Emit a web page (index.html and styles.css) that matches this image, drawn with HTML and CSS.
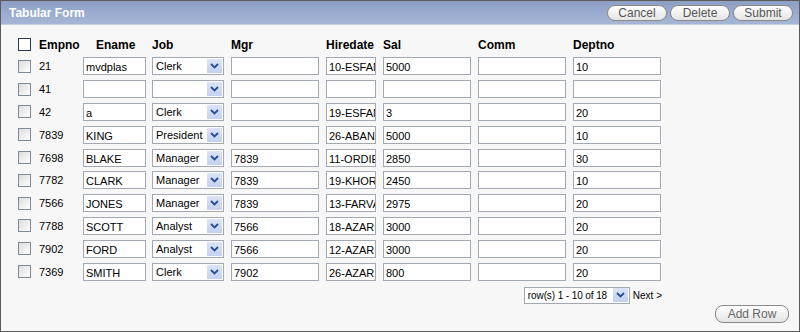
FILE: index.html
```html
<!DOCTYPE html>
<html lang="en">
<head>
<meta charset="UTF-8">
<title>Tabular Form</title>
<link rel="stylesheet" href="styles.css">
</head>
<body>
<div class="region">
  <div class="region-header">
    <span class="region-title">Tabular Form</span>
    <div class="region-buttons">
      <button class="pill">Cancel</button>
      <button class="pill">Delete</button>
      <button class="pill">Submit</button>
    </div>
  </div>
  <div class="region-body">
    <table class="tabform">
      <colgroup>
        <col class="c-chk"><col class="c-empno"><col class="c-ename"><col class="c-job">
        <col class="c-mgr"><col class="c-hire"><col class="c-sal"><col class="c-comm"><col class="c-dept">
      </colgroup>
      <thead>
        <tr>
          <th><span class="chk"></span></th>
          <th>Empno</th>
          <th class="center">Ename</th>
          <th>Job</th>
          <th>Mgr</th>
          <th>Hiredate</th>
          <th>Sal</th>
          <th>Comm</th>
          <th>Deptno</th>
        </tr>
      </thead>
      <tbody id="rows"></tbody>
    </table>
    <div class="pager">
      <div class="sel pager-sel"><span class="sel-text">row(s) 1 - 10 of 18</span><span class="sel-btn"><svg width="9" height="6" viewBox="0 0 9 6"><path d="M1 1 L4.5 4.5 L8 1" fill="none" stroke="#2a4a9a" stroke-width="1.8"/></svg></span></div>
      <a class="next">Next &gt;</a>
    </div>
    <div class="footer">
      <button class="pill add">Add Row</button>
    </div>
  </div>
</div>
<script>
const data = [
  ['21', 'mvdplas', 'Clerk', '', '10-ESFAN', '5000', '', '10'],
  ['41', '', '', '', '', '', '', ''],
  ['42', 'a', 'Clerk', '', '19-ESFAN', '3', '', '20'],
  ['7839', 'KING', 'President', '', '26-ABAN', '5000', '', '10'],
  ['7698', 'BLAKE', 'Manager', '7839', '11-ORDIE', '2850', '', '30'],
  ['7782', 'CLARK', 'Manager', '7839', '19-KHOR', '2450', '', '10'],
  ['7566', 'JONES', 'Manager', '7839', '13-FARVA', '2975', '', '20'],
  ['7788', 'SCOTT', 'Analyst', '7566', '18-AZAR', '3000', '', '20'],
  ['7902', 'FORD', 'Analyst', '7566', '12-AZAR', '3000', '', '20'],
  ['7369', 'SMITH', 'Clerk', '7902', '26-AZAR', '800', '', '20']
];
const arrow = '<span class="sel-btn"><svg width="9" height="6" viewBox="0 0 9 6"><path d="M1 1 L4.5 4.5 L8 1" fill="none" stroke="#2a4a9a" stroke-width="1.8"/></svg></span>';
const tbody = document.getElementById('rows');
data.forEach(r => {
  const tr = document.createElement('tr');
  tr.innerHTML =
    '<td><span class="chk"></span></td>' +
    '<td>' + r[0] + '</td>' +
    '<td><span class="fld w-ename">' + r[1] + '</span></td>' +
    '<td><div class="sel w-job"><span class="sel-text">' + r[2] + '</span>' + arrow + '</div></td>' +
    '<td><span class="fld w-wide">' + r[3] + '</span></td>' +
    '<td><span class="fld w-hire">' + r[4] + '</span></td>' +
    '<td><span class="fld w-wide">' + r[5] + '</span></td>' +
    '<td><span class="fld w-wide">' + r[6] + '</span></td>' +
    '<td><span class="fld w-wide">' + r[7] + '</span></td>';
  tbody.appendChild(tr);
});
</script>
</body>
</html>
```

FILE: styles.css
```css
body {
    margin: 0;
    font-family: "Liberation Sans", Arial, sans-serif;
    font-size: 11px;
    color: #000;
    background: #fff;
}

.region {
    width: 798px;
    height: 330px;
    border: 1px solid #5a5a5a;
    background-color: #f7f7f7;
    display: flex;
    flex-direction: column;
}

.region-header {
    height: 23px;
    display: flex;
    align-items: center;
    justify-content: space-between;
    padding: 0 6px 0 8px;
    background: linear-gradient(#8c9fc4, #a6b6d6);
    border-bottom: 1px solid #c8d0e0;
}

.region-title {
    color: #fff;
    font-weight: bold;
    font-size: 12px;
}

.region-buttons {
    display: flex;
    gap: 3px;
    padding-top: 1px;
}

.pill {
    height: 16px;
    padding: 0 10px;
    border: 1px solid #8a8a8a;
    border-radius: 8px;
    background: linear-gradient(#ffffff, #e4e4e4);
    color: #555;
    font-family: "Liberation Sans", Arial, sans-serif;
    font-size: 12px;
    line-height: 14px;
    min-width: 60px;
}

.region-body {
    flex: 1;
    padding: 9px 0 0 17px;
    display: flex;
    flex-direction: column;
}

.tabform {
    border-collapse: collapse;
    table-layout: fixed;
    width: 644px;
}

.c-chk { width: 21px; }
.c-empno { width: 44px; }
.c-ename { width: 69px; }
.c-job { width: 79px; }
.c-mgr { width: 95px; }
.c-hire { width: 57px; }
.c-sal { width: 95px; }
.c-comm { width: 95px; }
.c-dept { width: 89px; }

.tabform th {
    text-align: left;
    font-size: 12px;
    font-weight: bold;
    height: 21px;
    padding: 0;
    vertical-align: middle;
}

.tabform th.center {
    padding-left: 13px;
}

.tabform td {
    height: 22.8px;
    padding: 0;
    vertical-align: middle;
    white-space: nowrap;
}

.chk {
    display: block;
    width: 11px;
    height: 11px;
    border: 1px solid #7f8a99;
    background: linear-gradient(135deg, #dcdcdc, #ffffff);
}

thead .chk {
    border-color: #2d3a4d;
    background: #fff;
}

.fld {
    display: block;
    box-sizing: border-box;
    height: 18px;
    border: 1px solid #a2a9b3;
    background: #fff;
    padding: 2px 2px 0 2px;
    line-height: 14px;
    overflow: hidden;
}

.w-ename { width: 63px; }
.w-hire { width: 50px; }
.w-wide { width: 88px; }

.sel {
    display: flex;
    box-sizing: border-box;
    height: 18px;
    border: 1px solid #a2a9b3;
    background: #fff;
    align-items: center;
}

.w-job { width: 72px; }

.sel-text {
    flex: 1;
    padding-left: 3px;
    overflow: hidden;
    white-space: nowrap;
}

.sel-btn {
    width: 15px;
    height: 14px;
    margin-right: 1px;
    background: linear-gradient(#dbe4f7, #c3d1f0);
    display: flex;
    align-items: center;
    justify-content: center;
}

.pager {
    display: flex;
    justify-content: flex-end;
    align-items: center;
    gap: 3px;
    width: 644px;
    margin-top: 4px;
}

.pager-sel {
    width: 106px;
    height: 17px;
}

.pager-sel .sel-text {
    padding-left: 3px;
    font-size: 10px;
    letter-spacing: -0.1px;
}

.next {
    font-size: 10px;
    color: #000;
}

.footer {
    display: flex;
    justify-content: flex-end;
    padding: 1px 10px 0 0;
}

.add {
    width: 74px;
    height: 18px;
    color: #666;
}
```
